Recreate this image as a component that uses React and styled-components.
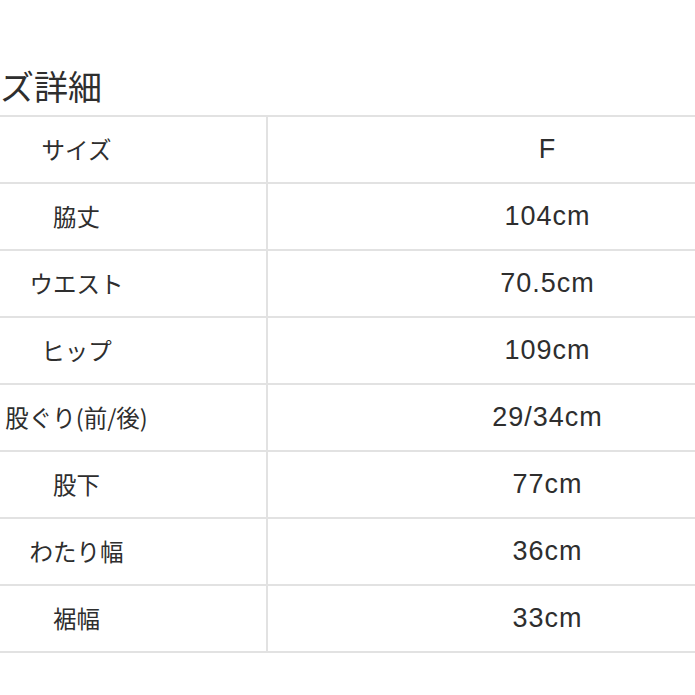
import { Fragment } from "react"
import styled, { createGlobalStyle } from "styled-components"

const GlobalStyle = createGlobalStyle`
  html, body {
    margin: 0;
    padding: 0;
    background: #fff;
    overflow: hidden;
  }
  body {
    font-family: "Liberation Sans", "Noto Sans CJK JP", sans-serif;
    color: #333;
  }
`

const Page = styled.div`
  width: 940px;
  margin-left: -113px;
  padding-top: 66px;
`

const Title = styled.h2`
  margin: 0 0 9px 0;
  padding-left: 46px;
  font-family: "Noto Sans CJK JP", sans-serif;
  font-weight: 400;
  font-size: 34px;
  line-height: 40px;
  color: #2e2e2e;
`

const Table = styled.div`
  display: grid;
  grid-template-columns: 381px 559px;
  border-top: 2px solid #e2e2e2;
`

const Cell = styled.div`
  height: 67px;
  padding-bottom: 1px;
  box-sizing: border-box;
  display: flex;
  align-items: center;
  justify-content: center;
  border-bottom: 2px solid #e2e2e2;
  border-right: ${(p) => (p.$label ? "2px solid #e2e2e2" : "none")};
  font-family: ${(p) =>
    p.$label
      ? `"Noto Sans CJK JP", sans-serif`
      : `"Liberation Sans", "Noto Sans CJK JP", sans-serif`};
  font-size: ${(p) => (p.$label ? "23.5px" : "27px")};
  letter-spacing: ${(p) => (p.$label ? "0" : "1px")};
  color: #2e2e2e;
`

const rows = [
  ["サイズ", "F"],
  ["脇丈", "104cm"],
  ["ウエスト", "70.5cm"],
  ["ヒップ", "109cm"],
  ["股ぐり(前/後)", "29/34cm"],
  ["股下", "77cm"],
  ["わたり幅", "36cm"],
  ["裾幅", "33cm"],
]

const App = () => {
  return (
    <>
      <GlobalStyle />
      <Page>
        <Title>サイズ詳細</Title>
        <Table>
          {rows.map(([name, value]) => (
            <Fragment key={name}>
              <Cell $label>{name}</Cell>
              <Cell>{value}</Cell>
            </Fragment>
          ))}
        </Table>
      </Page>
    </>
  )
}

export default App
